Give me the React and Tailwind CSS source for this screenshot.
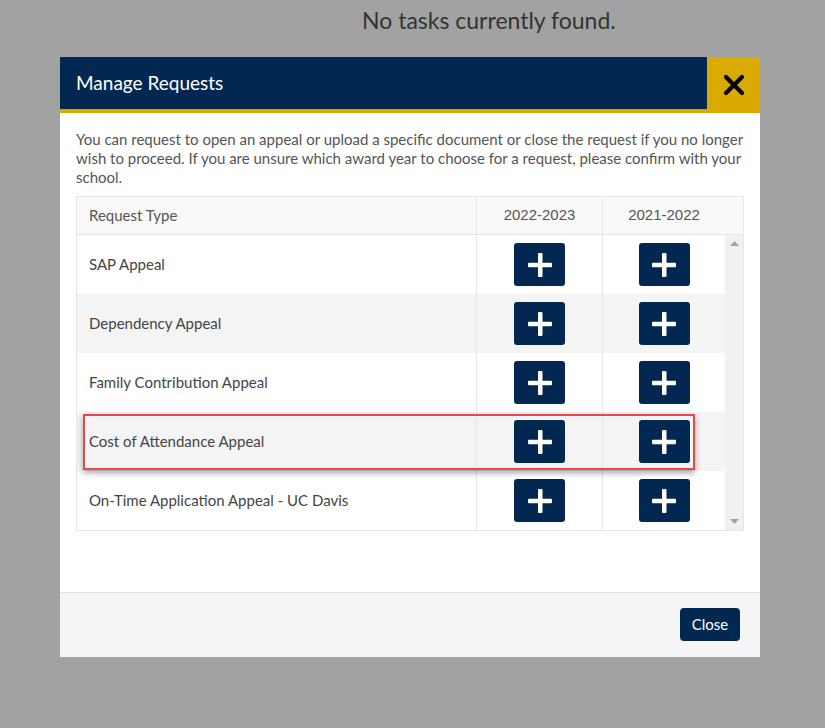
import React from "react";

const rows = [
  "SAP Appeal",
  "Dependency Appeal",
  "Family Contribution Appeal",
  "Cost of Attendance Appeal",
  "On-Time Application Appeal - UC Davis",
];

function PlusButton() {
  return (
    <button className="w-[51px] h-[43px] rounded-[3px] bg-[#022851] flex items-center justify-center">
      <svg width="26" height="26" viewBox="0 0 26 26">
        <rect x="11" y="1" width="4.5" height="24" rx="1" fill="#fff" />
        <rect x="1" y="10.8" width="24" height="4.5" rx="1" fill="#fff" />
      </svg>
    </button>
  );
}

export default function App() {
  return (
    <div className="w-[825px] h-[728px] bg-[#a2a2a2] overflow-hidden" style={{ fontFamily: "Lato, 'Open Sans', sans-serif" }}>
      <div className="pl-[362px] pt-[5px] h-[57px] text-[23px] leading-[30px] text-[#333]">No tasks currently found.</div>
      <div className="ml-[60px] w-[700px] bg-white flex flex-col">
        <div className="flex h-[56px]">
          <div className="flex-1 bg-[#022851] border-b-4 border-[#daaa00] flex items-center pl-4 text-white text-[19px]">
            Manage Requests
          </div>
          <div className="w-[53px] bg-[#daaa00] flex items-center justify-center">
            <svg width="22" height="22" viewBox="0 0 22 22">
              <path d="M3 3 L19 19 M19 3 L3 19" stroke="#000" strokeWidth="4.2" strokeLinecap="round" />
            </svg>
          </div>
        </div>
        <div className="px-4 pt-[17px] pb-[61px]">
          <p className="text-[15px] leading-[19px] text-[#555] mb-[9px]">
            You can request to open an appeal or upload a specific document or close the request if you no longer wish to proceed. If you are unsure which award year to choose for a request, please confirm with your school.
          </p>
          <div className="border border-[#e6e6e6]">
            <div className="flex h-[38px] bg-[#f9f9f9] border-b border-[#e6e6e6] text-[15px] text-[#555]">
              <div className="w-[399px] flex items-center pl-[12px]">Request Type</div>
              <div className="w-[126px] border-l border-[#e6e6e6] flex items-center justify-center" style={{ fontFamily: "'Liberation Sans', Arial, sans-serif" }}>2022-2023</div>
              <div className="flex-1 border-l border-[#e6e6e6] flex items-center justify-center pr-[18px]" style={{ fontFamily: "'Liberation Sans', Arial, sans-serif" }}>2021-2022</div>
            </div>
            <div className="flex relative">
              <div className="flex-1 flex flex-col">
                {rows.map((r, i) => (
                  <div key={r} className={`flex h-[59px] ${i % 2 === 1 ? "bg-[#f4f4f4]" : "bg-white"}`}>
                    <div className="w-[399px] flex items-center pl-[12px] text-[15px] text-[#444]">{r}</div>
                    <div className="w-[126px] border-l border-[#e6e6e6] flex items-center justify-center">
                      <PlusButton />
                    </div>
                    <div className="flex-1 border-l border-[#e6e6e6] flex items-center justify-center">
                      <PlusButton />
                    </div>
                  </div>
                ))}
              </div>
              <div className="w-[18px] bg-[#f1f1f1] flex flex-col items-center justify-between py-[6px]">
                <svg width="9" height="5" viewBox="0 0 9 5"><path d="M0 5 L4.5 0 L9 5 Z" fill="#a3a3a3" /></svg>
                <svg width="9" height="5" viewBox="0 0 9 5"><path d="M0 0 L4.5 5 L9 0 Z" fill="#a3a3a3" /></svg>
              </div>
              <div className="absolute left-[6px] top-[179px] w-[612px] h-[56px] border-2 border-[#e8474c] shadow-[0_3px_6px_rgba(0,0,0,0.35)] pointer-events-none" />
            </div>
          </div>
        </div>
        <div className="h-[65px] bg-[#f5f5f5] border-t border-[#e2e2e2] flex items-start justify-end pr-5 pt-[15px]">
          <button className="w-[60px] h-[33px] rounded-[4px] bg-[#022851] text-white text-[15px]">Close</button>
        </div>
      </div>
    </div>
  );
}
